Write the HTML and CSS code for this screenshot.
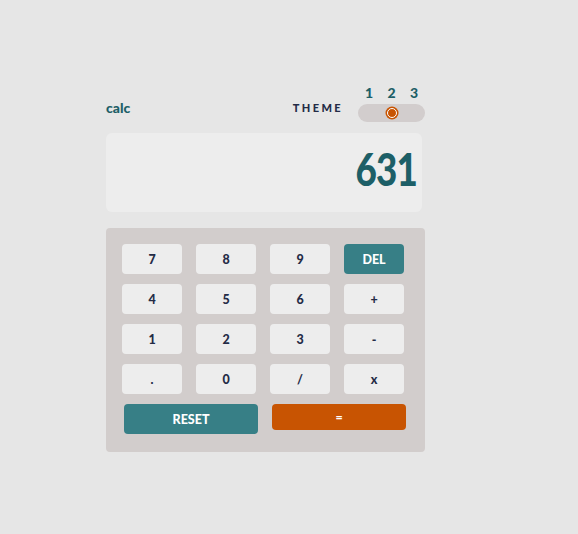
FILE: index.html
```html
<!DOCTYPE html>
<html>
<head>
<meta charset="utf-8">
<link rel="stylesheet" href="styles.css">
</head>
<body>
<div class="calc">
  <header class="header">
    <div class="logo">calc</div>
    <div class="theme">
      <span class="theme-label">THEME</span>
      <div class="switch">
        <div class="nums"><span>1</span><span>2</span><span>3</span></div>
        <div class="track"><span class="knob"></span></div>
      </div>
    </div>
  </header>
  <div class="display"><span class="value">631</span></div>
  <div class="keypad">
    <button class="key">7</button>
    <button class="key">8</button>
    <button class="key">9</button>
    <button class="key key-del">DEL</button>
    <button class="key">4</button>
    <button class="key">5</button>
    <button class="key">6</button>
    <button class="key">+</button>
    <button class="key">1</button>
    <button class="key">2</button>
    <button class="key">3</button>
    <button class="key">-</button>
    <button class="key">.</button>
    <button class="key">0</button>
    <button class="key">/</button>
    <button class="key">x</button>
    <div class="bottom">
      <button class="key key-reset">RESET</button>
      <button class="key key-eq">=</button>
    </div>
  </div>
</div>
</body>
</html>
```
FILE: styles.css
```css
html, body {
  margin: 0;
  padding: 0;
  background: #e6e6e6;
  font-family: "Lato", "Liberation Sans", sans-serif;
}
.calc {
  width: 319px;
  margin: 85px 0 0 106px;
}
.header {
  display: flex;
  justify-content: space-between;
  align-items: flex-end;
  height: 37px;
}
.logo {
  color: #1d5f67;
  font-weight: 900;
  font-size: 14px;
  line-height: 16px;
  margin-bottom: 6px;
}
.theme {
  display: flex;
  align-items: flex-end;
  gap: 15px;
}
.theme-label {
  color: #242b46;
  font-weight: 900;
  font-size: 11px;
  letter-spacing: 2.4px;
  line-height: 14px;
  margin-bottom: 7px;
}
.switch {
  width: 67px;
  display: flex;
  flex-direction: column;
}
.nums {
  display: flex;
  justify-content: space-between;
  padding: 0 7px 0 7px;
  color: #1d5f67;
  font-weight: 900;
  font-size: 14px;
  line-height: 16px;
  margin-bottom: 3px;
}
.track {
  height: 18px;
  border-radius: 9px;
  background: #d2cdcd;
  display: flex;
  align-items: center;
  justify-content: center;
}
.knob {
  width: 8px;
  height: 8px;
  border-radius: 50%;
  background: #c85402;
  border: 1.5px solid #fff;
  box-shadow: 0 0 0 1.5px #c85402;
}
.display {
  width: 316px;
  height: 79px;
  margin-top: 11px;
  box-sizing: border-box;
  background: #ededed;
  border-radius: 6px;
  color: #1d5f67;
  font-weight: 900;
  font-size: 46px;
  letter-spacing: -1px;
  text-align: right;
  padding-right: 5px;
  line-height: 72px;
}
.value {
  display: inline-block;
  transform: scaleX(0.8);
  transform-origin: right center;
}
.keypad {
  margin-top: 16px;
  background: #d2cdcc;
  border-radius: 4px;
  padding: 16px 21px 18px 16px;
  display: grid;
  grid-template-columns: repeat(4, 60px);
  grid-auto-rows: 30px;
  column-gap: 14px;
  row-gap: 10px;
}
.key {
  border: none;
  border-radius: 4px;
  background: #ededed;
  color: #242b46;
  font-family: inherit;
  font-weight: 900;
  font-size: 12.5px;
  padding: 0;
  cursor: pointer;
}
.key-del {
  background: #377f86;
  color: #fff;
}
.bottom {
  grid-column: 1 / -1;
  display: flex;
  gap: 14px;
  padding-left: 2px;
  align-items: flex-start;
}
.key-reset {
  flex: 0 0 134px;
  height: 30px;
  background: #377f86;
  color: #fff;
}
.key-eq {
  flex: 0 0 134px;
  height: 26px;
  background: #c85402;
  color: #fff;
}
```
